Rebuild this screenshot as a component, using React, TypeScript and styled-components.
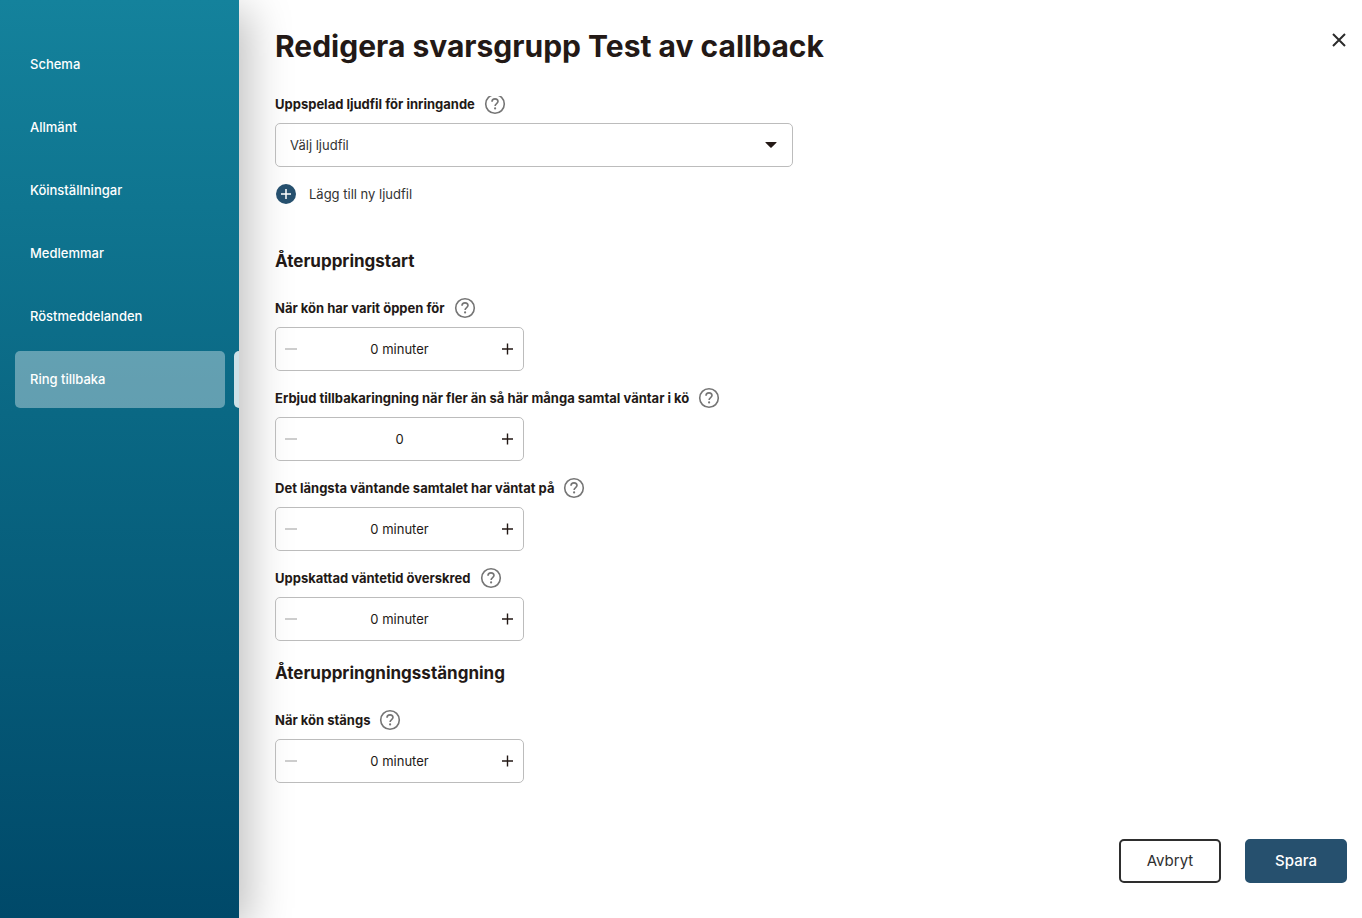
import React, { useId, useState } from "react";
import styled, { createGlobalStyle } from "styled-components";

const GlobalStyle = createGlobalStyle`
  *, *::before, *::after { box-sizing: border-box; }
  body { margin: 0; background: #fff; }
  body, button, input, select {
    font-family: Inter, "Liberation Sans", sans-serif;
    font-size: 13px;
    line-height: 20px;
    color: #231916;
  }
  button { cursor: pointer; }
`;

const Page = styled.div`
  display: flex;
  min-height: 100vh;
`;

const Sidebar = styled.nav`
  flex: 0 0 239px;
  display: flex;
  flex-direction: column;
  gap: 6px;
  padding: 36px 0 36px 15px;
  background: linear-gradient(#14829c, #0a6884 45%, #004969);
  box-shadow: 10px 10px 40px rgba(0, 0, 0, 0.25);
`;

const NavRow = styled.div`
  display: flex;
  justify-content: space-between;
`;

const NavLink = styled.a<{ $active: boolean }>`
  width: 210px;
  height: 57px;
  padding: 18px 15px;
  border-radius: 5px;
  color: #fff;
  font-weight: 500;
  text-decoration: none;
  background: ${(p) => (p.$active ? "rgba(255, 255, 255, 0.36)" : "transparent")};
`;

const ActiveMark = styled.span`
  width: 5px;
  border-radius: 5px 0 0 5px;
  background: rgba(255, 255, 255, 0.8);
`;

const Main = styled.main`
  flex: 1;
  min-width: 0;
  display: flex;
  flex-direction: column;
  padding: 26px 15px 35px 36px;
`;

const Header = styled.header`
  display: flex;
  justify-content: space-between;
  align-items: flex-start;
  height: 70px;
`;

const Title = styled.h1`
  margin: 0;
  font-size: 30px;
  line-height: 40px;
  font-weight: 700;
`;

const CloseButton = styled.button`
  display: flex;
  padding: 6px 0;
  border: 0;
  background: none;
`;

const ScrollArea = styled.div`
  flex: 1;
  overflow: hidden;
`;

const Form = styled.form`
  display: flex;
  flex-direction: column;
  align-items: flex-start;
  gap: 16px;
  margin-top: -3px;
`;

const SectionTitle = styled.h2<{ $space: number }>`
  margin: ${(p) => p.$space}px 0 8px;
  font-size: 17px;
  line-height: 24px;
  font-weight: 700;
`;

const Field = styled.div`
  display: flex;
  flex-direction: column;
  gap: 8px;
  max-width: 100%;
`;

const LabelRow = styled.div`
  display: flex;
  align-items: center;
  gap: 9px;
  height: 22px;
`;

const Label = styled.label`
  font-weight: 700;
`;

const HelpButton = styled.button`
  display: flex;
  padding: 0;
  border: 0;
  background: none;
`;

const SelectBox = styled.div`
  display: grid;
  align-items: center;
  width: 518px;
  max-width: 100%;
  > * { grid-area: 1 / 1; }
  > svg { justify-self: end; margin-right: 16px; pointer-events: none; }
`;

const Select = styled.select`
  appearance: none;
  width: 100%;
  height: 44px;
  padding: 0 14px;
  border: 1px solid #bcbcbc;
  border-radius: 5px;
  background: transparent;
  color: #333;
`;

const Stepper = styled.div`
  display: flex;
  width: 249px;
  height: 44px;
  border: 1px solid #bcbcbc;
  border-radius: 5px;
`;

const StepButton = styled.button`
  display: flex;
  align-items: center;
  justify-content: center;
  width: 30px;
  padding: 0;
  border: 0;
  background: none;
  color: #231916;
  &:disabled { color: #bcbcbc; cursor: default; }
`;

const StepValue = styled.input`
  flex: 1;
  min-width: 0;
  padding: 0;
  border: 0;
  background: none;
  text-align: center;
`;

const AddButton = styled.button`
  display: flex;
  align-items: center;
  gap: 12px;
  height: 22px;
  padding: 0;
  border: 0;
  background: none;
  color: #333;
`;

const Footer = styled.footer`
  display: flex;
  justify-content: flex-end;
  gap: 24px;
`;

const ActionButton = styled.button<{ $primary?: boolean }>`
  width: 102px;
  height: 44px;
  padding: 0;
  border: 2px solid ${(p) => (p.$primary ? "#26506e" : "#2e2e2e")};
  border-radius: 5px;
  background: ${(p) => (p.$primary ? "#26506e" : "#fff")};
  color: ${(p) => (p.$primary ? "#fff" : "#2e2e2e")};
  font-size: 15px;
  font-weight: ${(p) => (p.$primary ? 500 : 400)};
`;

function Help({ topic }: { topic: string }) {
  return (
    <HelpButton type="button" aria-label={`Hjälp: ${topic}`}>
      <svg width="22" height="22" viewBox="0 0 22 22" fill="none" stroke="#757575">
        <circle cx="11" cy="11" r="9.3" strokeWidth="1.6" />
        <path d="M8 8.7C8 6.9 9.3 5.9 11 5.9s3 1.1 3 2.7c0 1.9-2.9 2.2-2.9 4.3" strokeWidth="1.6" />
        <circle cx="11.1" cy="15.4" r="1.1" fill="#757575" stroke="none" />
      </svg>
    </HelpButton>
  );
}

function Counter({ label, unit }: { label: string; unit?: string }) {
  const id = useId();
  const [value, setValue] = useState(0);
  return (
    <Field>
      <LabelRow>
        <Label htmlFor={id}>{label}</Label>
        <Help topic={label} />
      </LabelRow>
      <Stepper>
        <StepButton type="button" aria-label="Minska" disabled={value === 0} onClick={() => setValue(value - 1)}>
          <svg width="12" height="12" viewBox="0 0 12 12" stroke="currentColor" strokeWidth="1.5">
            <path d="M0 6h12" />
          </svg>
        </StepButton>
        <StepValue id={id} type="text" readOnly value={unit ? `${value} ${unit}` : `${value}`} />
        <StepButton type="button" aria-label="Öka" onClick={() => setValue(value + 1)}>
          <svg width="12" height="12" viewBox="0 0 12 12" stroke="currentColor" strokeWidth="1.4">
            <path d="M0 6h11M5.5 .5v11" />
          </svg>
        </StepButton>
      </Stepper>
    </Field>
  );
}

const pages = ["Schema", "Allmänt", "Köinställningar", "Medlemmar", "Röstmeddelanden", "Ring tillbaka"];

export default function App() {
  const current = "Ring tillbaka";
  return (
    <>
      <GlobalStyle />
      <Page>
        <Sidebar>
          {pages.map((name) => (
            <NavRow key={name}>
              <NavLink href="#" $active={name === current}>{name}</NavLink>
              {name === current && <ActiveMark />}
            </NavRow>
          ))}
        </Sidebar>
        <Main>
          <Header>
            <Title>Redigera svarsgrupp Test av callback</Title>
            <CloseButton type="button" aria-label="Stäng">
              <svg width="16" height="16" viewBox="0 0 16 16" stroke="#2b2b2b" strokeWidth="2">
                <path d="M2 2l12 12M14 2L2 14" />
              </svg>
            </CloseButton>
          </Header>
          <ScrollArea>
            <Form>
              <Field>
                <LabelRow>
                  <Label htmlFor="sound">Uppspelad ljudfil för inringande</Label>
                  <Help topic="Uppspelad ljudfil" />
                </LabelRow>
                <SelectBox>
                  <Select id="sound">
                    <option>Välj ljudfil</option>
                  </Select>
                  <svg width="12" height="6" viewBox="0 0 12 6" fill="#231916">
                    <path d="M.8 0h10.4q.8 0 .2.7L6.6 5.5q-.6.5-1.2 0L.6.7Q0 0 .8 0z" />
                  </svg>
                </SelectBox>
              </Field>
              <AddButton type="button">
                <svg width="22" height="22" viewBox="0 0 22 22">
                  <circle cx="11" cy="11" r="10" fill="#26506e" />
                  <path d="M6 11h10M11 6v10" stroke="#fff" strokeWidth="1.5" />
                </svg>
                Lägg till ny ljudfil
              </AddButton>
              <SectionTitle $space={28}>Återuppringstart</SectionTitle>
              <Counter label="När kön har varit öppen för" unit="minuter" />
              <Counter label="Erbjud tillbakaringning när fler än så här många samtal väntar i kö" />
              <Counter label="Det längsta väntande samtalet har väntat på" unit="minuter" />
              <Counter label="Uppskattad väntetid överskred" unit="minuter" />
              <SectionTitle $space={4}>Återuppringningsstängning</SectionTitle>
              <Counter label="När kön stängs" unit="minuter" />
            </Form>
          </ScrollArea>
          <Footer>
            <ActionButton type="button">Avbryt</ActionButton>
            <ActionButton type="button" $primary>Spara</ActionButton>
          </Footer>
        </Main>
      </Page>
    </>
  );
}
